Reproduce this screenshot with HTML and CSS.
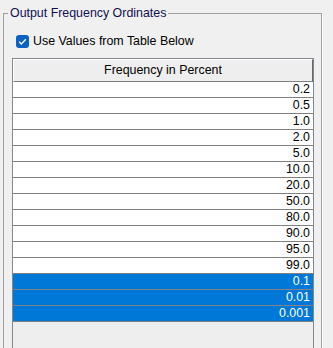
FILE: index.html
```html
<!DOCTYPE html>
<html>
<head>
    <title>Output Frequency Ordinates</title>
    <link rel="stylesheet" href="styles.css">
</head>
<body>
    <fieldset class="group">
        <legend>Output Frequency Ordinates</legend>
        <label class="check-row">
            <span class="check">
                <svg width="13" height="13" viewBox="0 0 13 13"><path d="M3.2 6.8 L5.4 9 L9.8 4.3" fill="none" stroke="#fff" stroke-width="1.3"/></svg>
            </span>
            <span>Use Values from Table Below</span>
        </label>
        <div class="pane">
            <div class="head">Frequency in Percent</div>
            <div class="row">0.2</div>
            <div class="row">0.5</div>
            <div class="row">1.0</div>
            <div class="row">2.0</div>
            <div class="row">5.0</div>
            <div class="row">10.0</div>
            <div class="row">20.0</div>
            <div class="row">50.0</div>
            <div class="row">80.0</div>
            <div class="row">90.0</div>
            <div class="row">95.0</div>
            <div class="row">99.0</div>
            <div class="row selected">0.1</div>
            <div class="row selected">0.01</div>
            <div class="row selected">0.001</div>
        </div>
    </fieldset>
</body>
</html>
```

FILE: styles.css
```css
html,
body {
    margin: 0;
    height: 100%;
    overflow: hidden;
}

body {
    background: #f0f0f0;
    font-family: "Liberation Sans", Arial, sans-serif;
    font-size: 12.4px;
    color: #000;
}

.group {
    margin: 6px 11px 0 3px;
    padding: 0;
    border: 1px solid #a0a0a0;
    box-shadow: 1px 1px 0 #fff;
    height: 400px;
    box-sizing: border-box;
}

.group legend {
    margin-left: 4px;
    padding: 0 2px;
    line-height: 14px;
    color: #101050;
}

.check-row {
    display: flex;
    align-items: center;
    gap: 4px;
    margin: 14px 0 0 12px;
    line-height: 14px;
}

.check {
    width: 13px;
    height: 13px;
    border-radius: 3px;
    background: #0a62c4;
    display: flex;
}

.pane {
    margin: 10px 7px 0 8px;
    border: 1px solid #828790;
    background: #eeeeee;
    height: 320px;
}

.head {
    height: 21px;
    line-height: 21px;
    text-align: center;
    background: #eeeeee;
    border-top: 1px solid #fff;
    border-left: 1px solid #fff;
    border-right: 1px solid #696969;
    border-bottom: 1px solid #808080;
}

.row {
    height: 15px;
    line-height: 15px;
    text-align: right;
    padding-right: 3px;
    background: #fff;
    border-bottom: 1px solid #808080;
}

.row.selected {
    background: #0078d7;
    color: #fff;
}
```
